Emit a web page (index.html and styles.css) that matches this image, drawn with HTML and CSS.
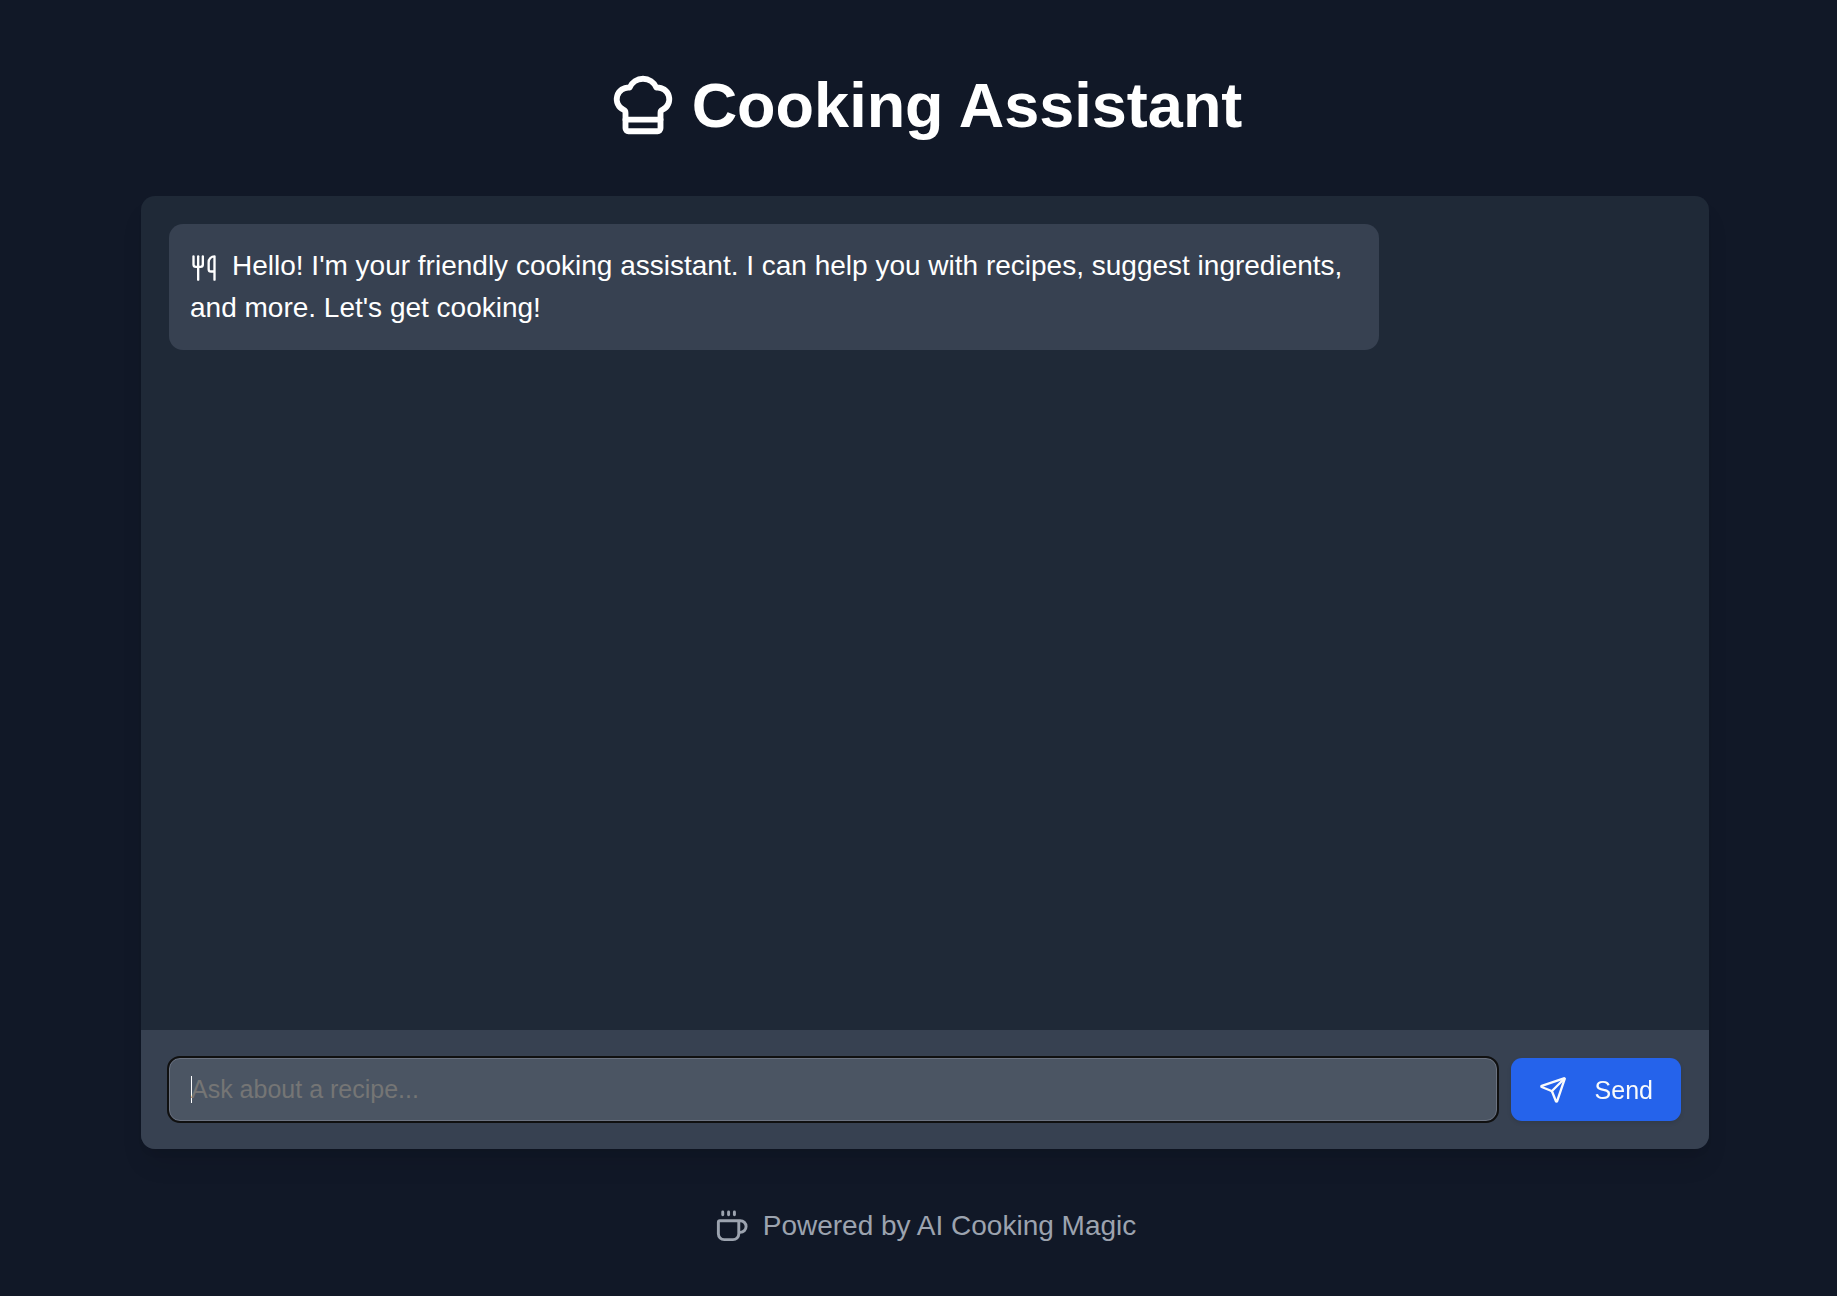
FILE: index.html
```html
<!DOCTYPE html>
<html lang="en">
<head>
<meta charset="utf-8">
<meta name="viewport" content="width=device-width, initial-scale=1">
<title>Cooking Assistant</title>
<link rel="stylesheet" href="styles.css">
</head>
<body>
<div class="page">
  <header class="header">
    <h1 class="title">
      <svg class="icon icon-hat" viewBox="0 0 24 24" aria-hidden="true"><path d="M17 21a1 1 0 0 0 1-1v-5.35c0-.457.316-.844.727-1.041a4 4 0 0 0-2.134-7.589 5 5 0 0 0-9.186 0 4 4 0 0 0-2.134 7.588c.411.198.727.585.727 1.041V20a1 1 0 0 0 1 1Z"/><path d="M6 17h12"/></svg>
      <span>Cooking Assistant</span>
    </h1>
  </header>
  <main class="card">
    <section class="messages" aria-label="Conversation">
      <p class="message"><svg class="icon icon-inline" viewBox="0 0 24 24" aria-hidden="true"><path d="M3 2v7c0 1.1.9 2 2 2h4a2 2 0 0 0 2-2V2"/><path d="M7 2v20"/><path d="M21 15V2a5 5 0 0 0-5 5v6c0 1.1.9 2 2 2h3Zm0 0v7"/></svg>Hello! I'm your friendly cooking assistant. I can help you with recipes, suggest ingredients, and more. Let's get cooking!</p>
    </section>
    <form class="composer">
      <input class="field" type="text" aria-label="Your question" placeholder="Ask about a recipe..." autocomplete="off" autofocus>
      <button class="send" type="button">
        <svg class="icon icon-small" viewBox="0 0 24 24" aria-hidden="true"><path d="M14.536 21.686a.5.5 0 0 0 .937-.024l6.5-19a.496.496 0 0 0-.635-.635l-19 6.5a.5.5 0 0 0-.024.937l7.93 3.18a2 2 0 0 1 1.112 1.11z"/><path d="m21.854 2.147-10.94 10.939"/></svg>
        <span>Send</span>
      </button>
    </form>
  </main>
  <footer class="footer">
    <svg class="icon icon-cup" viewBox="0 0 24 24" aria-hidden="true"><path d="M10 2v2"/><path d="M14 2v2"/><path d="M16 8a1 1 0 0 1 1 1v8a4 4 0 0 1-4 4H7a4 4 0 0 1-4-4V9a1 1 0 0 1 1-1h14a4 4 0 1 1 0 8h-1"/><path d="M6 2v2"/></svg>
    <span>Powered by AI Cooking Magic</span>
  </footer>
</div>
</body>
</html>
```
FILE: styles.css
```css
* {
  box-sizing: border-box;
}

body {
  margin: 0;
  background: #111827;
  color: #ffffff;
  font-family: "Liberation Sans", Arial, sans-serif;
  font-size: 28px;
  line-height: 42px;
}

.page {
  display: flex;
  flex-direction: column;
  align-items: center;
  gap: 56px;
  min-height: 100vh;
  padding: 70px 0 49px 13px;
}

.icon {
  flex: none;
  fill: none;
  stroke: currentColor;
  stroke-width: 2;
  stroke-linecap: round;
  stroke-linejoin: round;
}

.icon-hat {
  width: 70px;
  height: 70px;
}

.icon-inline {
  width: 28px;
  height: 28px;
  margin-right: 14px;
  vertical-align: middle;
}

.icon-small {
  width: 28px;
  height: 28px;
}

.icon-cup {
  width: 35px;
  height: 35px;
}

.title {
  display: flex;
  align-items: center;
  gap: 14px;
  margin: 0;
  font-size: 63px;
  font-weight: 700;
  line-height: 70px;
}

.card {
  display: flex;
  flex: 1;
  flex-direction: column;
  width: 100%;
  max-width: 1568px;
  overflow: hidden;
  background: #1f2937;
  border-radius: 14px;
  box-shadow: 0 18px 26px -5px rgba(0, 0, 0, 0.1), 0 7px 11px -7px rgba(0, 0, 0, 0.1);
}

.messages {
  flex: 1;
  padding: 28px;
}

.message {
  max-width: 80%;
  margin: 0;
  padding: 21px;
  background: #374151;
  border-radius: 14px;
}

.composer {
  display: flex;
  gap: 14px;
  padding: 28px;
  background: #374151;
}

.field {
  flex: 1;
  min-width: 0;
  height: 63px;
  padding: 17px 21px;
  border: 1px solid #6b7280;
  border-radius: 11px;
  outline: 2px solid #101010;
  background: #4b5563 linear-gradient(#ffffff, #ffffff) left center / 1px 27px no-repeat content-box;
  background-clip: border-box;
  caret-color: transparent;
  color: #ffffff;
  font: inherit;
  font-size: 25px;
}

.field::placeholder {
  color: #757575;
}

.send {
  display: flex;
  align-items: center;
  gap: 28px;
  padding: 0 28px;
  border: 0;
  border-radius: 11px;
  background: #2563eb;
  box-shadow: 0 2px 4px rgba(0, 0, 0, 0.1);
  color: #f9fafb;
  font: inherit;
  font-size: 25px;
  cursor: pointer;
}

.footer {
  display: flex;
  align-items: center;
  gap: 14px;
  color: #9ca3af;
}
```
